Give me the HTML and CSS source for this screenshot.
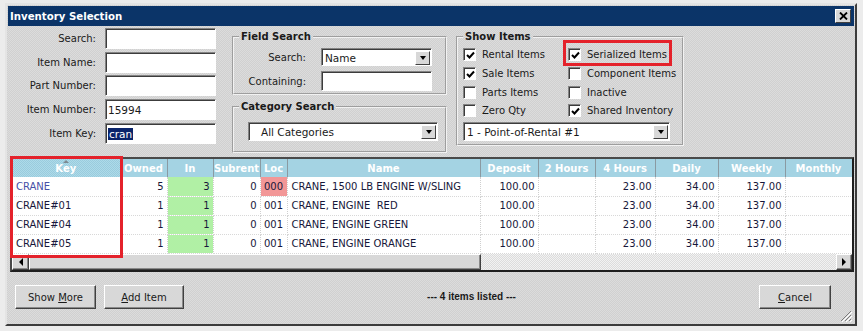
FILE: index.html
```html
<!DOCTYPE html>
<html lang="en">
<head>
  <meta charset="UTF-8">
  <meta name="viewport" content="width=device-width, initial-scale=1.0">
  <title>Inventory Selection</title>
  <link rel="stylesheet" href="styles.css">
</head>
<body>
  <div class="window">
    <div class="titlebar">
      <span class="title">Inventory Selection</span>
      <span class="close-btn">
        <svg width="9" height="8" viewBox="0 0 9 8"><path d="M1 0.5l7 7M8 0.5l-7 7" stroke="#000" stroke-width="1.8"/></svg>
      </span>
    </div>

    <div class="content">
      <div class="top">
        <div class="search-form">
          <div class="form-row"><span class="lbl">Search:</span><span class="input"></span></div>
          <div class="form-row"><span class="lbl">Item Name:</span><span class="input"></span></div>
          <div class="form-row"><span class="lbl">Part Number:</span><span class="input"></span></div>
          <div class="form-row"><span class="lbl">Item Number:</span><span class="input">15994</span></div>
          <div class="form-row"><span class="lbl">Item Key:</span><span class="input"><span class="selected-text">cran</span></span></div>
        </div>

        <div class="search-groups">
          <fieldset class="group field-search">
            <legend>Field Search</legend>
            <div class="fs-row">
              <span class="lbl">Search:</span>
              <span class="select select-name"><span class="select-value">Name</span><span class="select-btn"></span></span>
            </div>
            <div class="fs-row">
              <span class="lbl">Containing:</span>
              <span class="input input-short"></span>
            </div>
          </fieldset>

          <fieldset class="group category-search">
            <legend>Category Search</legend>
            <span class="select select-category"><span class="select-value">All Categories</span><span class="select-btn"></span></span>
          </fieldset>
        </div>

        <fieldset class="group show-items">
          <legend>Show Items</legend>
          <div class="check-grid">
            <label class="check"><span class="box"><svg width="9" height="9" viewBox="0 0 9 9"><path d="M1 4l2.5 2.5L8 1.5" stroke="#000" stroke-width="2" fill="none"/></svg></span>Rental Items</label>
            <label class="check"><span class="box"><svg width="9" height="9" viewBox="0 0 9 9"><path d="M1 4l2.5 2.5L8 1.5" stroke="#000" stroke-width="2" fill="none"/></svg></span>Serialized Items</label>
            <label class="check"><span class="box"><svg width="9" height="9" viewBox="0 0 9 9"><path d="M1 4l2.5 2.5L8 1.5" stroke="#000" stroke-width="2" fill="none"/></svg></span>Sale Items</label>
            <label class="check"><span class="box"></span>Component Items</label>
            <label class="check"><span class="box"></span>Parts Items</label>
            <label class="check"><span class="box"></span>Inactive</label>
            <label class="check"><span class="box"></span>Zero Qty</label>
            <label class="check"><span class="box"><svg width="9" height="9" viewBox="0 0 9 9"><path d="M1 4l2.5 2.5L8 1.5" stroke="#000" stroke-width="2" fill="none"/></svg></span>Shared Inventory</label>
          </div>
          <span class="select select-store"><span class="select-value">1 - Point-of-Rental #1</span><span class="select-btn"></span></span>
        </fieldset>

        <div class="mark mark-serialized"></div>
      </div>

      <div class="grid-wrap">
        <div class="grid">
          <div class="grid-rows">
            <table>
              <colgroup>
                <col style="width:108px"><col style="width:47px"><col style="width:46px"><col style="width:47px">
                <col style="width:27px"><col style="width:193px"><col style="width:58px"><col style="width:57px">
                <col style="width:60px"><col style="width:63px"><col style="width:67px"><col style="width:67px">
              </colgroup>
              <thead>
                <tr>
                  <th class="sorted">Key</th><th>Owned</th><th>In</th><th>Subrent</th><th>Loc</th><th>Name</th>
                  <th>Deposit</th><th>2 Hours</th><th>4 Hours</th><th>Daily</th><th>Weekly</th><th>Monthly</th>
                </tr>
              </thead>
              <tbody>
                <tr>
                  <td class="key current">CRANE</td><td class="num">5</td><td class="num avail">3</td><td class="num">0</td>
                  <td class="loc loc-warn">000</td><td>CRANE, 1500 LB ENGINE W/SLING</td>
                  <td class="num">100.00</td><td class="num"></td><td class="num">23.00</td><td class="num">34.00</td><td class="num">137.00</td><td></td>
                </tr>
                <tr>
                  <td class="key">CRANE#01</td><td class="num">1</td><td class="num avail">1</td><td class="num">0</td>
                  <td class="loc">001</td><td>CRANE, ENGINE &nbsp;RED</td>
                  <td class="num">100.00</td><td class="num"></td><td class="num">23.00</td><td class="num">34.00</td><td class="num">137.00</td><td></td>
                </tr>
                <tr>
                  <td class="key">CRANE#04</td><td class="num">1</td><td class="num avail">1</td><td class="num">0</td>
                  <td class="loc">001</td><td>CRANE, ENGINE GREEN</td>
                  <td class="num">100.00</td><td class="num"></td><td class="num">23.00</td><td class="num">34.00</td><td class="num">137.00</td><td></td>
                </tr>
                <tr>
                  <td class="key">CRANE#05</td><td class="num">1</td><td class="num avail">1</td><td class="num">0</td>
                  <td class="loc">001</td><td>CRANE, ENGINE ORANGE</td>
                  <td class="num">100.00</td><td class="num"></td><td class="num">23.00</td><td class="num">34.00</td><td class="num">137.00</td><td></td>
                </tr>
              </tbody>
            </table>
          </div>
          <div class="hscroll">
            <span class="sb-btn sb-left"></span>
            <span class="sb-thumb"></span>
            <span class="sb-track"></span>
            <span class="sb-btn sb-right"></span>
          </div>
        </div>
        <div class="mark mark-key"></div>
      </div>

      <div class="bottom">
        <span class="btn btn-more"><span>Show <u>M</u>ore</span></span>
        <span class="btn btn-add"><span><u>A</u>dd Item</span></span>
        <span class="status">--- 4 items listed ---</span>
        <span class="btn btn-cancel"><span><u>C</u>ancel</span></span>
        <span class="grip">
          <svg width="12" height="12" viewBox="0 0 12 12">
            <path d="M11 1L1 11M11 5L5 11M11 9L9 11" stroke="#7a7a7a" stroke-width="1"/>
            <path d="M12 2L2 12M12 6L6 12M12 10L10 12" stroke="#fff" stroke-width="1"/>
          </svg>
        </span>
      </div>
    </div>
  </div>
</body>
</html>
```

FILE: styles.css
```css
* {
  box-sizing: border-box;
}

body {
  margin: 0;
  padding: 3px 0 0 5px;
  background: #ececec;
  font-family: "DejaVu Sans", Verdana, sans-serif;
  font-size: 10px;
  color: #1a1a1a;
}

.window {
  width: 852px;
  height: 323px;
  padding: 1px;
  border: 2px solid;
  border-color: #e4e4e4 #3c3c3c #3c3c3c #e4e4e4;
  background: repeating-conic-gradient(#d0d0d0 0 25%, #dcdcdc 0 50%) 0 0 / 2px 2px;
  display: flex;
  flex-direction: column;
}

/* title bar */
.titlebar {
  height: 20px;
  flex: none;
  background: #0b3468;
  display: flex;
  align-items: center;
  justify-content: space-between;
  padding: 0 3px 0 2px;
}

.title {
  color: #fff;
  font-weight: bold;
  font-size: 10.2px;
}

.close-btn {
  width: 16px;
  height: 14px;
  background: #d8d8d8;
  border: 1px solid;
  border-color: #fff #404040 #404040 #fff;
  display: flex;
  align-items: center;
  justify-content: center;
}

.content {
  flex: 1;
  display: flex;
  flex-direction: column;
}

/* top search area */
.top {
  height: 131px;
  flex: none;
  display: flex;
  align-items: flex-start;
  position: relative;
}

.search-form {
  width: 208px;
  padding-top: 2px;
  display: flex;
  flex-direction: column;
  gap: 2.7px;
}

.form-row {
  display: flex;
  align-items: center;
  gap: 9px;
}

.lbl {
  flex: none;
  text-align: right;
}

.search-form .lbl {
  width: 88px;
}

.input {
  display: block;
  width: 111px;
  height: 21px;
  background: #fff;
  border: 1px solid;
  border-color: #848484 #fff #fff #848484;
  box-shadow: inset 1px 1px 0 #3c3c3c;
  padding: 3px 0 0 2px;
  font-size: 10.5px;
  line-height: 14px;
}

.input-short {
  height: 20px;
}

.selected-text {
  background: #0a246a;
  color: #fff;
  padding: 0 1px;
}

.search-groups {
  width: 215px;
  margin-left: 16px;
  padding-top: 4px;
  display: flex;
  flex-direction: column;
  gap: 5px;
}

.group {
  margin: 0;
  padding: 0;
  min-width: 0;
  border: 2px groove #f2f2f2;
}

.group legend {
  margin-left: 5px;
  padding: 0 2px;
  font-weight: bold;
  line-height: 14px;
}

.field-search {
  height: 65px;
  padding-top: 4px;
}

.fs-row {
  display: flex;
  align-items: center;
  gap: 15px;
}

.fs-row + .fs-row {
  margin-top: 5px;
}

.fs-row .lbl {
  width: 72px;
}

.select {
  display: flex;
  align-items: center;
  justify-content: space-between;
  width: 111px;
  height: 18px;
  background: #fff;
  border: 1px solid;
  border-color: #848484 #fff #fff #848484;
  box-shadow: inset 1px 1px 0 #3c3c3c;
  padding: 1px 1px 0 3px;
  font-size: 10.5px;
}

.select-btn {
  width: 15px;
  height: 14px;
  flex: none;
  background: #d8d8d8;
  border: 1px solid;
  border-color: #fff #404040 #404040 #fff;
  display: flex;
  align-items: center;
  justify-content: center;
}

.select-btn::after {
  content: "";
  border-left: 3.5px solid transparent;
  border-right: 3.5px solid transparent;
  border-top: 4px solid #000;
}

.category-search {
  height: 53px;
  padding-top: 8px;
}

.select-category {
  width: 190px;
  height: 19px;
  margin-left: 14px;
}

.select-category .select-value {
  padding-left: 9px;
}

.show-items {
  width: 228px;
  height: 116px;
  margin: 4px 0 0 9px;
  padding-top: 1.5px;
}

.check-grid {
  display: grid;
  grid-template-columns: 105px 1fr;
  grid-auto-rows: 18.7px;
  margin-left: 5px;
}

.check {
  display: flex;
  align-items: center;
  gap: 6px;
  white-space: nowrap;
}

.box {
  width: 13px;
  height: 13px;
  flex: none;
  background: #fff;
  border: 1px solid;
  border-color: #848484 #fff #fff #848484;
  box-shadow: inset 1px 1px 0 #3c3c3c;
  display: flex;
  align-items: center;
  justify-content: center;
  padding: 1px 0 0 1px;
}

.select-store {
  width: 207px;
  height: 19px;
  margin: 1.5px 0 0 5px;
}

/* red annotation boxes */
.mark {
  position: absolute;
  border: 3px solid #e4222b;
}

.mark-serialized {
  left: 555px;
  top: 14px;
  width: 109px;
  height: 26px;
}

.mark-key {
  left: 0;
  top: -1px;
  width: 113px;
  height: 102px;
}

/* grid */
.grid-wrap {
  position: relative;
  margin-left: 2px;
  width: 844px;
  height: 115px;
  flex: none;
}

.grid {
  height: 100%;
  border: 2px solid;
  border-color: #4a4a4a #1e1e1e #1e1e1e #4a4a4a;
  background: #fff;
  display: flex;
  flex-direction: column;
}

.grid-rows {
  flex: 1;
  overflow: hidden;
}

table {
  width: 840px;
  table-layout: fixed;
  border-collapse: collapse;
}

th {
  height: 18px;
  padding: 0;
  background: repeating-conic-gradient(#9acbdd 0 25%, #addbe9 0 50%) 0 0 / 2px 2px;
  color: #fff;
  font-weight: bold;
  font-size: 10px;
  text-align: center;
  border-right: 1px solid #8a9aa2;
  white-space: nowrap;
}

th.sorted {
  position: relative;
}

th.sorted::before {
  content: "";
  position: absolute;
  top: 1px;
  left: 50%;
  margin-left: -3px;
  border-left: 3px solid transparent;
  border-right: 3px solid transparent;
  border-bottom: 3px solid #7d8a92;
}

td {
  height: 19px;
  padding: 0 4px;
  border-right: 1px dotted #cfcfcf;
  border-bottom: 1px dotted #d8d8d8;
  white-space: nowrap;
  overflow: hidden;
  color: #17173a;
}

td.num {
  text-align: right;
  padding: 0 3px 0 0;
}

td.loc {
  text-align: center;
  padding: 0;
}

td.key.current {
  color: #4650a6;
}

td.avail {
  background: repeating-conic-gradient(#a4ec98 0 25%, #bdf3b2 0 50%) 0 0 / 2px 2px;
}

td.loc-warn {
  background: repeating-conic-gradient(#ee8a8a 0 25%, #f5a3a3 0 50%) 0 0 / 2px 2px;
}

.hscroll {
  height: 16px;
  flex: none;
  display: flex;
  background: repeating-conic-gradient(#dcdcdc 0 25%, #f2f2f2 0 50%) 0 0 / 2px 2px;
}

.sb-btn,
.sb-thumb {
  background: #d8d8d8;
  border: 1px solid;
  border-color: #fff #404040 #404040 #fff;
  box-shadow: inset -1px -1px 0 #8a8a8a;
}

.sb-btn {
  width: 17px;
  display: flex;
  align-items: center;
  justify-content: center;
}

.sb-left::after {
  content: "";
  border-top: 4px solid transparent;
  border-bottom: 4px solid transparent;
  border-right: 4px solid #000;
}

.sb-right {
  width: 16px;
}

.sb-right::after {
  content: "";
  border-top: 4px solid transparent;
  border-bottom: 4px solid transparent;
  border-left: 4px solid #000;
}

.sb-thumb {
  width: 452px;
}

.sb-track {
  flex: 1;
}

/* bottom buttons */
.bottom {
  flex: 1;
  display: flex;
  align-items: flex-start;
  padding: 13px 2px 0 7px;
}

.btn {
  height: 24px;
  display: flex;
  align-items: center;
  justify-content: center;
  background: #d8d8d8;
  border: 1px solid;
  border-color: #fff #404040 #404040 #fff;
  box-shadow: inset -1px -1px 0 #8a8a8a;
}

.btn-more {
  width: 81px;
}

.btn-add {
  width: 80px;
  margin-left: 8px;
}

.status {
  flex: 1;
  text-align: center;
  line-height: 24px;
  font-family: "Liberation Sans", Arial, sans-serif;
  font-weight: bold;
  font-size: 10px;
}

.btn-cancel {
  width: 72px;
  margin-right: 9px;
}

.grip {
  align-self: flex-end;
  width: 12px;
  height: 12px;
  margin-bottom: 1px;
  display: flex;
}
```
